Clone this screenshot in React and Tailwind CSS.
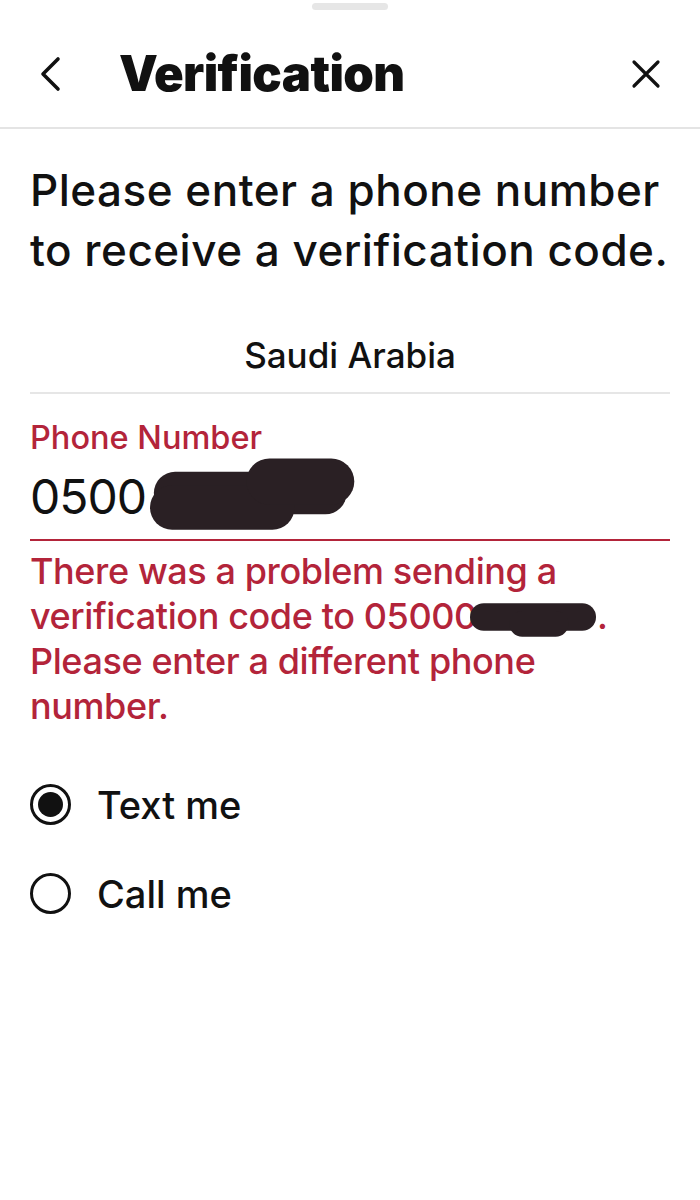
import React from "react";

function Blob({ className }) {
  return (
    <svg className={className} viewBox="0 0 220 80" fill="none">
      <g fill="#2a2024">
        <rect x="4" y="16" width="200" height="44" rx="22" />
        <rect x="0" y="30" width="150" height="46" rx="23" />
        <rect x="100" y="2" width="112" height="48" rx="24" />
      </g>
    </svg>
  );
}

function SmallBlob({ className }) {
  return (
    <svg className={className} viewBox="0 0 130 40" fill="none">
      <g fill="#2a2024">
        <rect x="0" y="4" width="128" height="28" rx="14" />
        <rect x="40" y="12" width="60" height="26" rx="13" />
      </g>
    </svg>
  );
}

export default function App() {
  return (
    <div
      className="w-[700px] h-[1200px] bg-white flex flex-col"
      style={{ fontFamily: "Inter, 'Liberation Sans', sans-serif" }}
    >
      {/* grabber */}
      <div className="flex justify-center pt-[3px]">
        <div className="w-[76px] h-[7px] rounded-full bg-[#e6e6e6]" />
      </div>

      {/* header */}
      <div className="h-[119px] pt-[10px] flex items-center px-[38px] border-b-2 border-[#e4e4e4]">
        <svg width="24" height="36" viewBox="0 0 24 36">
          <path d="M20 3 L5 18 L20 33" stroke="#111" strokeWidth="3.6" fill="none" strokeLinecap="round" strokeLinejoin="round" />
        </svg>
        <div className="ml-[57px] text-[49px] font-black tracking-[-0.6px] text-[#111] leading-none">
          Verification
        </div>
        <div className="flex-1" />
        <svg width="32" height="32" viewBox="0 0 32 32">
          <path d="M4 4 L28 28 M28 4 L4 28" stroke="#111" strokeWidth="3.2" strokeLinecap="round" />
        </svg>
      </div>

      {/* content */}
      <div className="px-[30px] flex flex-col">
        <div className="mt-[31px] text-[44px] font-medium leading-[60px] text-[#111] tracking-[0.5px]">
          Please enter a phone number to receive a verification code.
        </div>

        <div className="mt-[55px] text-center text-[35px] font-medium text-[#111] leading-[40px]">
          Saudi Arabia
        </div>
        <div className="mt-[17px] h-[2px] bg-[#e6e6e6]" />

        <div className="mt-[24px] text-[32.5px] font-medium text-[#b3243a] leading-[40px]">Phone Number</div>
        <div className="relative mt-[4px] h-[70px] flex items-center">
          <span className="text-[48px] text-[#111] leading-none tracking-[-1px]">0500</span>
          <Blob className="absolute left-[120px] top-[-6px] w-[212px] h-[78px]" />
        </div>
        <div className="mt-[7px] h-[2px] bg-[#b3243a]" />

        <div className="relative mt-[8px] text-[36px] font-medium leading-[45px] text-[#b3243a] tracking-[-0.4px]">
          There was a problem sending a verification code to 05000<span className="inline-block w-[120px]"></span>. Please enter a different phone number.
          <SmallBlob className="absolute left-[440px] top-[50px] w-[128px] h-[40px]" />
        </div>

        {/* radios */}
        <div className="mt-[55px] flex items-center gap-[26px]">
          <div className="w-[41px] h-[41px] rounded-full border-[3px] border-[#111] flex items-center justify-center">
            <div className="w-[25px] h-[25px] rounded-full bg-[#111]" />
          </div>
          <span className="text-[38px] font-medium text-[#111] leading-none">Text me</span>
        </div>
        <div className="mt-[48px] flex items-center gap-[26px]">
          <div className="w-[41px] h-[41px] rounded-full border-[3px] border-[#111]" />
          <span className="text-[38px] font-medium text-[#111] leading-none">Call me</span>
        </div>
      </div>
    </div>
  );
}
